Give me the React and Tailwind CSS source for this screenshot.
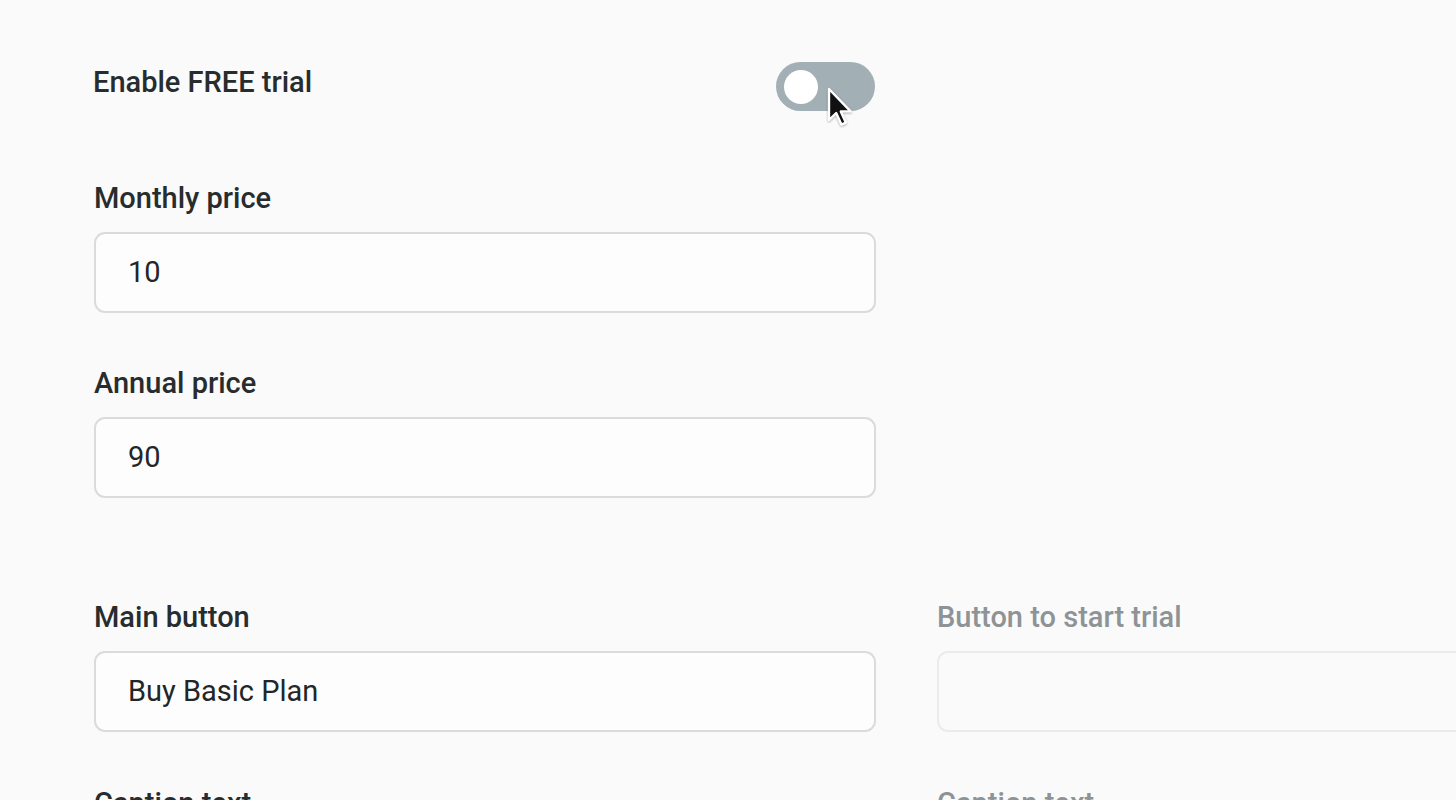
const Field = ({ label, value, muted }) => {
  return (
    <div className="flex flex-col w-[782px] shrink-0">
      <label
        className={
          "text-[29px] leading-[34px] font-medium " +
          (muted ? "text-[#8e9395]" : "text-[#272c2e]")
        }
      >
        {label}
      </label>
      <div
        className={
          "mt-[17px] h-[81px] rounded-[11px] border-2 flex items-center pl-[32px] text-[29px] text-[#222627] " +
          (muted ? "border-[#ebebeb] bg-[#fafafa]" : "border-[#d9dcdd] bg-[#fdfdfd]")
        }
      >
        {value}
      </div>
    </div>
  );
};

const Cursor = () => (
  <svg
    width="26"
    height="40"
    viewBox="0 0 13 20"
    className="absolute left-[51px] top-[25px] drop-shadow-[0_1px_1px_rgba(0,0,0,0.3)]"
  >
    <path
      d="M1 1 L1 16.5 L4.6 13 L7.2 18.8 L9.4 17.8 L6.9 12.2 L11.8 12.2 Z"
      fill="#111"
      stroke="#fff"
      strokeWidth="1.2"
      strokeLinejoin="round"
    />
  </svg>
);

const App = () => {
  return (
    <div
      className="w-[1456px] h-[800px] overflow-hidden bg-[#fafafa] pl-[94px] pt-[62px]"
      style={{ fontFamily: "Roboto, 'Noto Sans', Arial, sans-serif" }}
    >
      <div className="flex justify-between items-start w-[781px]">
        <span className="mt-[3px] text-[29px] leading-[34px] font-medium text-[#272c2e] -ml-[1px]">
          Enable FREE trial
        </span>
        <div className="relative">
          <div className="w-[99px] h-[49px] rounded-full bg-[#a2b0b5] flex items-center pl-[8px]">
            <div className="w-[34px] h-[34px] rounded-full bg-white" />
          </div>
          <Cursor />
        </div>
      </div>

      <div className="mt-[70px]">
        <Field label="Monthly price" value="10" />
      </div>

      <div className="mt-[53px]">
        <Field label="Annual price" value="90" />
      </div>

      <div className="mt-[102px] flex gap-[61px]">
        <Field label="Main button" value="Buy Basic Plan" />
        <Field label="Button to start trial" value="" muted />
      </div>

      <div className="mt-[54px] flex gap-[61px]">
        <div className="w-[782px] shrink-0 text-[29px] leading-[34px] font-medium text-[#272c2e]">
          Caption text
        </div>
        <div className="w-[782px] shrink-0 text-[29px] leading-[34px] font-medium text-[#8e9395]">
          Caption text
        </div>
      </div>
    </div>
  );
};

export default App;
